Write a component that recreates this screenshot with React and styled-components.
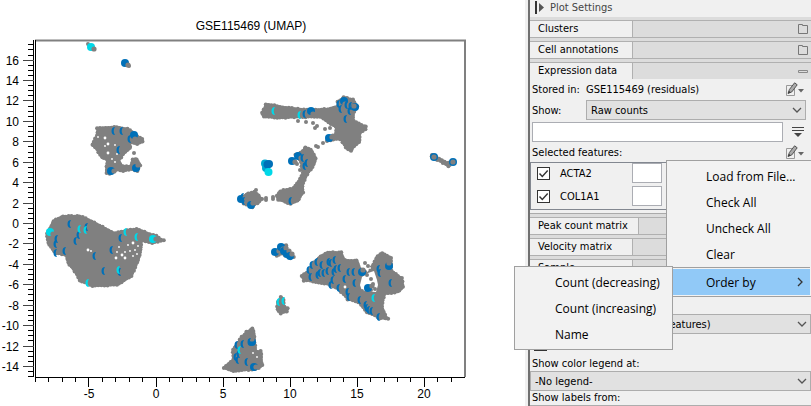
import styled, { createGlobalStyle } from "styled-components";

const GREY = "#808080";
const BLUE = "#0070b8";
const CYAN = "#00d8e8";
const TEAL = "#00a8d0";

// Outlines run clockwise
const clusters = [
  [[46,233],[53,220],[63,215],[80,215],[92,220],[103,226],[115,232],[127,229],[137,228],[150,233],[157,235],[164,241],[152,244],[142,242],[142,250],[140,258],[136,268],[132,277],[117,286],[92,287],[79,281],[74,272],[67,263],[65,256],[55,254],[47,243]],
  [[97,127],[117,126],[128,128],[133,131],[143,139],[143,143],[137,145],[131,144],[131,149],[124,155],[120,161],[123,165],[130,165],[133,158],[138,159],[141,166],[137,172],[132,170],[123,172],[117,171],[109,175],[105,173],[106,160],[101,158],[96,150],[91,144],[96,135]],
  [[261,112],[266,103],[283,106],[307,109],[327,108],[337,105],[337,101],[344,96],[354,99],[358,107],[354,115],[354,120],[367,127],[366,130],[361,134],[360,143],[350,152],[345,148],[340,140],[330,141],[327,138],[335,133],[335,128],[328,123],[320,118],[297,118],[277,119],[263,117]],
  [[302,150],[306,146],[312,149],[317,159],[315,165],[308,175],[304,183],[304,193],[298,202],[290,205],[277,200],[276,195],[280,190],[293,187],[298,181],[302,173],[300,163],[295,154]],
  [[239,198],[248,192],[255,191],[260,195],[262,200],[258,204],[252,208],[243,204]],
  [[301,275],[308,270],[313,262],[320,255],[330,251],[342,252],[345,259],[358,260],[361,268],[368,272],[372,264],[377,255],[383,252],[392,258],[392,270],[403,278],[404,288],[398,293],[385,295],[383,306],[388,320],[380,319],[366,313],[358,303],[347,300],[338,290],[327,285],[310,282],[303,281]],
  [[277,301],[282,296],[285,300],[285,306],[289,309],[287,313],[280,314],[276,309]],
  [[223,367],[232,359],[232,349],[237,342],[241,336],[246,331],[253,328],[255,331],[256,345],[257,350],[262,351],[263,366],[259,369],[252,371],[245,371],[233,372],[226,369]],
  [[274,252],[282,244],[287,245],[288,250],[294,258],[290,259],[282,255],[276,256]],
  [[432,155],[437,156],[448,162],[453,160],[455,163],[448,167],[434,159]],
];

const gaps = [
  [88,250],[91,251],[117,252],[122,255],[125,252],[128,245],[133,243],[135,250],[133,256],[125,258],[138,246],[130,251],[116,258],[137,254],[119,247],
  [105,138],[105,146],[115,145],[108,153],[117,154],[115,162],[108,144],[98,137],[112,159],
  [345,287],[257,357],[253,353],[364,266],[370,268],[367,268],
];

const looseDots = [
  [88,44],[93,49],[134,153],[127,64],[129,66],[306,122],[298,121],[313,123],[317,126],[315,128],[325,129],[330,128],[323,143],[327,141],[316,146],[318,147],
  [297,164],[300,170],[273,197],[273,199],[266,200],[266,198],[262,199],[256,190],[365,263],[368,266],[371,279],[367,275],[373,284],[375,289],[362,291],[366,292],[371,290],[432,155],
];

// [x, y, colour, cover x, cover y]
const rings = [
  [91,47,CYAN,94,49],[125,63,BLUE,128,65],[134,135,BLUE,135,139],[136,168,BLUE,138,165],[111,171,BLUE,114,171],
  [311,111,BLUE,313,114],[344,101,BLUE,345,104],[355,107,BLUE,354,106],[329,138,BLUE,332,137],[292,161,BLUE,295,162],[298,156,BLUE,301,158],
  [241,199,BLUE,244,198],[251,205,BLUE,253,203],[434,157,BLUE,434,157],[453,162,BLUE,453,162],
  [275,252,BLUE,279,251],[281,247,BLUE,283,249],[284,251,BLUE,286,248],[287,254,BLUE,289,251],[290,256,BLUE,292,254],
  [368,288,BLUE,372,286],[362,272,BLUE,363,270],[389,266,BLUE,389,263],[153,239,CYAN,156,239],[254,367,BLUE,256,367],
  [252,342,BLUE,252,339],[50,232,CYAN,53,234],
];

const crescents = [
  [BLUE, [[70,224],[87,227],[79,235],[76,241],[57,239],[56,244],[65,251],[56,253],[95,256],[112,250],[121,238],[104,271],[120,272],
    [114,131],[122,131],[119,150],[130,139],[305,114],[339,104],[341,109],[347,105],[351,106],[350,111],[346,119],
    [303,158],[305,166],[307,163],[291,201],[244,201],[243,197],
    [309,270],[311,277],[312,265],[317,262],[318,275],[320,273],[322,265],[324,273],[328,271],[329,262],[331,263],[335,260],[334,272],[333,280],[336,269],[340,268],[349,272],[345,279],[354,272],[355,283],[331,285],[339,288],[348,292],[349,297],[360,300],[367,308],[369,310],[372,311],[379,317],[379,269],[380,273],[391,283],[366,305],
    [237,345],[243,344],[250,342],[236,357],[238,360],[247,362],[239,354]]],
  [CYAN, [[80,229],[86,230],[126,232],[137,237],[119,270],[88,283],[274,111],[300,115],[279,302],[374,298],[240,350],[284,301]]],
];

// Fixed seed, so that the ragged cluster borders stay the same on each render
const borderDots = (points) => {
  const dots = [];
  let seed = 7;
  points.forEach(([x, y], i) => {
    const [nx, ny] = points[(i + 1) % points.length];
    const length = Math.hypot(nx - x, ny - y);
    const steps = Math.max(1, Math.round(length / 3));
    for (let s = 0; s < steps; s++) {
      seed = (seed * 16807) % 2147483647;
      const inset = 0.8 + (seed % 100) / 100;
      dots.push([
        x + ((nx - x) * s) / steps - ((ny - y) / length) * inset,
        y + ((ny - y) * s) / steps + ((nx - x) / length) * inset,
      ]);
    }
  });
  return dots;
};

const range = (from, to) => Array.from({ length: to - from + 1 }, (_, i) => from + i);
const plotX = (v) => 156 + v * 13.42;
const plotY = (v) => 223.5 - v * 10.21;

const UmapPlot = () => (
  <Plot viewBox="0 0 525 406" role="img" aria-label="GSE115469 (UMAP)">
    <text x="251" y="30" textAnchor="middle">
      GSE115469 (UMAP)
    </text>
    <path d="M35 40.5H465V377" fill="none" stroke={GREY} strokeWidth="2" />
    <g stroke="#000" shapeRendering="crispEdges">
      <path d="M33.5 40V377M35.5 40V377M35 377.5H465" />
      {range(-30, 35).map((n) => (
        <path key={n} d={`M${n % 4 ? 28 : 23} ${Math.floor(plotY(n / 2)) + 0.5}H34`} stroke={n % 4 ? "#000" : "#444"} />
      ))}
      {range(-9, 22).map((n) => (
        <path key={n} d={`M${Math.floor(plotX(n)) + 0.5} 377V${n % 5 ? 382 : 387}`} />
      ))}
    </g>
    {range(-7, 8).map((n) => (
      <text key={n} x="19" y={Math.floor(plotY(n * 2)) + 5} textAnchor="end">
        {n * 2}
      </text>
    ))}
    {range(-1, 4).map((n) => (
      <text key={n} x={Math.round(plotX(n * 5))} y="398" textAnchor="middle">
        {n * 5}
      </text>
    ))}
    {clusters.map((points, i) => (
      <g key={i} fill={GREY}>
        <polygon points={points.join(" ")} />
        {borderDots(points).map(([x, y], j) => (
          <circle key={j} cx={x} cy={y} r="2" />
        ))}
      </g>
    ))}
    <path d="M362 277L368 273L374 271L377 280L378 285L376 292L362 291L360 285Z" fill="#fff" />
    {gaps.map(([x, y], i) => (
      <circle key={i} cx={x} cy={y} r={i % 3 ? 0.9 : 1.4} fill="#fff" />
    ))}
    {looseDots.map(([x, y], i) => (
      <circle key={i} cx={x} cy={y} r="2" fill={GREY} />
    ))}
    {rings.map(([x, y, colour, cx, cy], i) => (
      <g key={i}>
        <circle cx={x} cy={y} r="4" fill={colour} />
        <circle cx={cx} cy={cy} r="2.6" fill={GREY} />
      </g>
    ))}
    {crescents.map(([colour, spots]) =>
      spots.map(([x, y], i) => (
        <path key={colour + i} d={`M${x + 1} ${y - 4}a3.5 4 0 0 0 0 8q-2.6 -4 0 -8z`} fill={colour} />
      ))
    )}
    <circle cx="265" cy="163.5" r="4" fill={TEAL} />
    <circle cx="266" cy="168" r="4" fill={TEAL} />
    <circle cx="267.5" cy="164.5" r="4" fill={BLUE} />
    <circle cx="269" cy="164" r="4" fill={BLUE} />
    <circle cx="268.5" cy="172" r="4" fill={CYAN} />
  </Plot>
);

const FolderIcon = () => (
  <svg width="12" height="12" viewBox="0 0 12 12" fill="none" stroke="#777">
    <path d="M1.5 1.5h4v1h5v8h-9z" />
  </svg>
);

const CollapseIcon = () => (
  <svg width="12" height="12" viewBox="0 0 12 12" fill="none" stroke="#888">
    <path d="M1.5 5.5h9v2h-9z" />
  </svg>
);

const EditIcon = () => (
  <svg width="18" height="14" viewBox="0 0 18 14" fill="none">
    <path d="M.5 3.5h8v10h-8z" stroke="#999" />
    <path d="M2 11.5l1.4-4L8.6.8l2.6 2L5.8 9.9z" fill="#aaa" stroke="#555" />
    <path d="M2 11.5l1-2.6 1.7 1.4z" fill="#333" />
    <path d="M12 7h6l-3 3.5z" fill="#666" />
  </svg>
);

const FilterIcon = () => (
  <svg width="12" height="12" viewBox="0 0 12 12" fill="#444">
    <path d="M0 1h12v1H0zM0 4h12v1H0zM2 7h8L6 11z" />
  </svg>
);

const Chevron = () => (
  <svg width="10" height="10" viewBox="0 0 10 10" fill="none" stroke="#555" strokeWidth="1.3">
    <path d="M1 3l4 4 4-4" />
  </svg>
);

const Section = ({ title, open, wide }) => (
  <SectionBar $open={open}>
    <SectionTab $wide={wide}>{title}</SectionTab>
    {open ? <CollapseIcon /> : <FolderIcon />}
  </SectionBar>
);

const Dropdown = ({ id, value, label }) => (
  <SelectBox>
    <Select id={id} aria-label={label}>
      <option>{value}</option>
    </Select>
    <Chevron />
  </SelectBox>
);

const CheckBox = (props) => (
  <CheckWrap>
    <input type="checkbox" defaultChecked {...props} />
    <svg width="13" height="13" viewBox="0 0 13 13" fill="none" stroke="#333" strokeWidth="1.4">
      <path d="M2.5 6.5l2.8 3 5.4-6" />
    </svg>
  </CheckWrap>
);

const App = () => (
  <Page>
    <GlobalStyle />
    <PlotArea>
      <UmapPlot />
    </PlotArea>
    <Panel>
      <PanelHeader>
        <svg width="10" height="13" viewBox="0 0 10 13">
          <path d="M0 0h2v13H0z" fill="#333" />
          <path d="M4 2l5 4.5-5 4.5z" fill="#555" />
        </svg>
        Plot Settings
      </PanelHeader>
      <Sections>
        <Section title="Clusters" />
        <Section title="Cell annotations" />
        <Section title="Expression data" open />
      </Sections>
      <SectionBody>
        <Row>
          <Label as="span">Stored in:</Label>
          <Value>GSE115469 (residuals)</Value>
          <IconButton aria-label="Edit source">
            <EditIcon />
          </IconButton>
        </Row>
        <ShowRow>
          <Label htmlFor="show">Show:</Label>
          <Dropdown id="show" value="Raw counts" />
        </ShowRow>
        <FilterRow>
          <TextBox aria-label="Filter" />
          <IconButton aria-label="Filter options">
            <FilterIcon />
          </IconButton>
        </FilterRow>
        <Row>
          <Value>Selected features:</Value>
          <IconButton aria-label="Edit features">
            <EditIcon />
          </IconButton>
        </Row>
      </SectionBody>
      <Features>
        {["ACTA2", "COL1A1"].map((name) => (
          <Feature key={name}>
            <CheckBox id={name} />
            <label htmlFor={name}>{name}</label>
            <Swatch aria-label={`${name} colour`} />
          </Feature>
        ))}
      </Features>
      <Sections $lower>
        <Section title="Peak count matrix" wide />
        <Section title="Velocity matrix" />
        <Section title="Sample" />
      </Sections>
      <Options>
        <Dropdown id="scale" label="Scale" value="Expression rank (selected features)" />
        <CheckRow>
          <CheckBox aria-label="Draw on top" />
        </CheckRow>
        <OptionLabel htmlFor="legend">Show color legend at:</OptionLabel>
        <Dropdown id="legend" value="-No legend-" />
        <OptionLabel htmlFor="labels">Show labels from:</OptionLabel>
        <Dropdown id="labels" value="" />
      </Options>
      <Menu>
        <MenuItem>Load from File...</MenuItem>
        <MenuItem>Check All</MenuItem>
        <MenuItem>Uncheck All</MenuItem>
        <MenuItem>Clear</MenuItem>
        <MenuGroup>
          <MenuItem $active>
            Order by
            <svg width="8" height="10" viewBox="0 0 8 10" fill="none" stroke="#333" strokeWidth="1.3">
              <path d="M2 1l4 4-4 4" />
            </svg>
          </MenuItem>
          <SubMenu>
            <MenuItem>Count (decreasing)</MenuItem>
            <MenuItem>Count (increasing)</MenuItem>
            <MenuItem>Name</MenuItem>
          </SubMenu>
        </MenuGroup>
      </Menu>
    </Panel>
  </Page>
);

export default App;

const GlobalStyle = createGlobalStyle`
  * {
    box-sizing: border-box;
  }
  body {
    margin: 0;
    background: #fff;
    overflow: hidden;
  }
  svg {
    display: block;
    flex-shrink: 0;
  }
  button, input, select {
    font: inherit;
    color: inherit;
    margin: 0;
    border-radius: 0;
  }
`;

const Page = styled.div`
  display: flex;
  height: 100vh;
  overflow: hidden;
  color: #000;
  font-family: "DejaVu Sans Condensed", "DejaVu Sans", sans-serif;
  font-size: 11px;
`;

const PlotArea = styled.main`
  flex: 1;
  min-width: 0;
  border-right: 3px solid #f0f0f0;
`;

const Plot = styled.svg`
  width: 100%;
  font-family: "Liberation Sans", Arial, sans-serif;
  font-size: 12px;
`;

const Panel = styled.aside`
  position: relative;
  width: 283px;
  flex-shrink: 0;
  background: #f0f0f0;
  border-left: 2px solid #707070;
`;

const PanelHeader = styled.header`
  display: flex;
  align-items: center;
  gap: 5px;
  height: 17px;
  padding: 0 5px 3px;
  color: #444;
`;

const Sections = styled.div`
  display: flex;
  flex-direction: column;
  gap: 3px;
  padding-top: 3px;
  background: #dcdcdc;
  ${(props) => props.$lower && "border-top: 1px solid #aaa; margin-top: 3px;"}
`;

const SectionBar = styled.div`
  display: flex;
  align-items: center;
  justify-content: space-between;
  height: ${(props) => (props.$open ? "17px" : "18px")};
  padding-right: 2px;
  border: solid #b0b0b0;
  border-width: ${(props) => (props.$open ? "1px 0 0" : "1px 0")};
`;

const SectionTab = styled.div`
  align-self: stretch;
  width: ${(props) => (props.$wide ? "109px" : "103px")};
  padding-left: 8px;
  line-height: 15px;
  background: #f0f0f0;
  border-right: 1px solid #b0b0b0;
`;

const SectionBody = styled.div`
  padding: 0 5px 0 2px;
`;

const Row = styled.div`
  display: flex;
  align-items: center;
  height: 20px;
`;

const ShowRow = styled(Row)`
  height: 22px;
`;

const FilterRow = styled(Row)`
  height: 21px;
  gap: 9px;
`;

const Label = styled.label`
  width: 54px;
`;

const Value = styled.span`
  flex: 1;
`;

const IconButton = styled.button`
  display: flex;
  padding: 0 2px 0 0;
  border: 0;
  background: none;
`;

const SelectBox = styled.div`
  display: grid;
  flex: 1;
  align-items: center;
  > * {
    grid-area: 1 / 1;
  }
  svg {
    justify-self: end;
    margin-right: 4px;
    pointer-events: none;
  }
`;

const Select = styled.select`
  appearance: none;
  width: 100%;
  height: 20px;
  padding: 0 18px 0 4px;
  border: 1px solid #adadad;
  background: #e1e1e1;
`;

const TextBox = styled.input`
  flex: 1;
  min-width: 0;
  height: 20px;
  border: 1px solid #abadb3;
  background: #fff;
`;

const Features = styled.div`
  display: flex;
  flex-direction: column;
  gap: 3px;
  height: 48px;
  border: 1px solid #828790;
`;

const Feature = styled.div`
  display: flex;
  align-items: center;
  gap: 10px;
  height: 20px;
  padding-left: 6px;
  label {
    width: 62px;
  }
`;

const CheckWrap = styled.span`
  display: grid;
  justify-items: start;
  > * {
    grid-area: 1 / 1;
  }
  input {
    appearance: none;
    width: 13px;
    height: 13px;
    border: 1px solid #333;
    background: #fff;
  }
  svg {
    pointer-events: none;
  }
`;

const Swatch = styled.button`
  width: 30px;
  height: 20px;
  padding: 0;
  border: 1px solid #abadb3;
  background: #fff;
`;

const Options = styled.div`
  display: flex;
  flex-direction: column;
  padding-top: 37px;
`;

const CheckRow = styled.div`
  padding: 4px 4px 6px;
`;

const OptionLabel = styled.label`
  padding-left: 2px;
  line-height: 14px;
`;

const Menu = styled.div`
  position: absolute;
  top: 160px;
  right: 0;
  width: 145px;
  padding: 2px 1px 1px 0;
  border: 1px solid #a0a0a0;
  border-right: 0;
  background: #f2f2f2;
  font-family: "Open Sans", "Noto Sans", sans-serif;
  font-size: 12px;
`;

const MenuItem = styled.button`
  display: flex;
  align-items: center;
  justify-content: space-between;
  width: 100%;
  height: 26px;
  padding: 0 6px 0 39px;
  border: 0;
  text-align: left;
  background: ${(props) => (props.$active ? "#91c9f7" : "none")};
`;

const MenuGroup = styled.div`
  position: relative;
  padding-top: 1px;
  border-top: 1px solid #a0a0a0;
`;

const SubMenu = styled.div`
  position: absolute;
  top: -2px;
  right: 137px;
  width: 159px;
  padding: 2px 1px;
  border: 1px solid #a0a0a0;
  background: #f2f2f2;
`;
